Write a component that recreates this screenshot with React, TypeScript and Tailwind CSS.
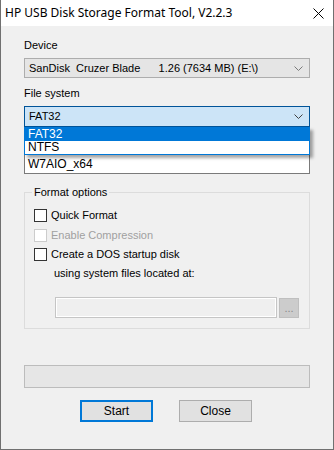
import React from 'react';

const body = { fontFamily: '"Liberation Sans", Arial, sans-serif' };

const Chevron: React.FC<{ color?: string }> = ({ color = '#606060' }) => (
  <svg width="9" height="5" viewBox="0 0 9 5" className="shrink-0">
    <path d="M0.5 0.5 L4.5 4.5 L8.5 0.5" fill="none" stroke={color} strokeWidth="1" />
  </svg>
);

const Check: React.FC<{ label: string; disabled?: boolean; className?: string }> = ({ label, disabled, className = '' }) => (
  <div className={`flex items-center h-[13px] ${className}`}>
    <span
      className={`w-[13px] h-[13px] border bg-white ${disabled ? 'border-[#cccccc]' : 'border-[#333333]'}`}
    />
    <span className={`ml-[4px] leading-[13px] ${disabled ? 'text-[#a0a0a0]' : 'text-black'}`}>{label}</span>
  </div>
);

export default function App() {
  return (
    <div className="w-[334px] h-[450px] flex flex-col border-x border-b border-[#707070] bg-[#f0f0f0] text-[11px]" style={body}>
      {/* Title bar */}
      <div className="h-[26px] bg-white flex items-center justify-between pl-[4px] pr-[9px]">
        <span className="text-[12px] text-black" style={{ fontFamily: '"Noto Sans", "Liberation Sans", sans-serif' }}>
          HP USB Disk Storage Format Tool, V2.2.3
        </span>
        <svg width="11" height="11" viewBox="0 0 11 11">
          <path d="M0.5 0.5 L10.5 10.5 M10.5 0.5 L0.5 10.5" stroke="#000" strokeWidth="1" />
        </svg>
      </div>

      <div className="flex flex-col px-[23px]">
        {/* Device */}
        <div className="mt-[13px] leading-[13px]">Device</div>
        <div className="mt-[6px] h-[20px] flex items-center justify-between border border-[#adadad] bg-[#e5e5e5] pl-[4px] pr-[6px]">
          <span className="whitespace-pre">SanDisk  Cruzer Blade      1.26 (7634 MB) (E:\)</span>
          <Chevron color="#7a7a7a" />
        </div>

        {/* File system */}
        <div className="mt-[9px] leading-[13px]">File system</div>
        <div className="relative mt-[6px]">
          <div className="h-[21px] flex items-center justify-between border border-[#005499] bg-[#cce4f7] pl-[4px] pr-[6px]">
            <span>FAT32</span>
            <Chevron color="#404040" />
          </div>
          <div className="absolute left-0 top-full w-full z-10 border border-[#0078d7] bg-white shadow-[3px_3px_3px_rgba(0,0,0,0.35)] text-[12px]">
            <div className="h-[13px] leading-[13px] pl-[3px] bg-[#0078d7] text-white">FAT32</div>
            <div className="h-[13px] leading-[13px] pl-[3px] text-black">NTFS</div>
          </div>
        </div>

        {/* Volume label (label hidden behind the open list) */}
        <div className="mt-[26px] h-[21px] flex items-center border border-[#7a7a7a] bg-white pl-[3px] text-[12px]">
          W7AIO_x64
        </div>

        {/* Format options */}
        <fieldset className="mt-[12px] border border-[#dcdcdc] pb-[10px]">
          <legend className="ml-[7px] px-[2px] leading-[13px]">Format options</legend>
          <div className="pl-[9px] flex flex-col">
            <Check label="Quick Format" className="mt-[10px]" />
            <Check label="Enable Compression" disabled className="mt-[7px]" />
            <Check label="Create a DOS startup disk" className="mt-[6px]" />
            <div className="mt-[6px] ml-[20px] leading-[13px]">using system files located at:</div>
          </div>
          <div className="mt-[17px] ml-[30px] flex items-start gap-[2px]">
            <div className="w-[222px] h-[21px] border border-[#c5c5c5] bg-[#efefef] shadow-[inset_0_0_0_1px_#ffffff]" />
            <div className="mt-[1px] w-[20px] h-[20px] border border-[#bfbfbf] bg-[#cccccc] flex items-center justify-center text-[#8a8a8a] leading-none">
              ...
            </div>
          </div>
        </fieldset>

        {/* Progress */}
        <div className="mt-[36px] h-[23px] border border-[#bcbcbc] bg-[#e6e6e6]" />

        {/* Buttons */}
        <div className="mt-[12px] ml-[56px] flex gap-[26px]">
          <button className="w-[73px] h-[22px] border-2 border-[#0078d7] bg-[#e1e1e1] text-black text-[12px]">Start</button>
          <button className="w-[73px] h-[22px] border border-[#adadad] bg-[#e1e1e1] text-black text-[12px]">Close</button>
        </div>
      </div>
    </div>
  );
}
